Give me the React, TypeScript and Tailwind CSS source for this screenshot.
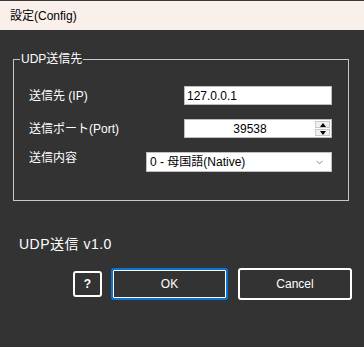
import { ChevronDown } from 'lucide-react';

const font = { fontFamily: '"Liberation Sans", "Noto Sans CJK JP", sans-serif' };

function Spinner() {
    return (
        <div className="flex flex-col gap-px w-[16px] h-full py-px pr-px">
            <div className="flex-1 flex items-center justify-center bg-[#f0f0f0] border border-[#c8c8c8]">
                <div className="w-0 h-0 border-l-[3px] border-r-[3px] border-b-[4px] border-l-transparent border-r-transparent border-b-black" />
            </div>
            <div className="flex-1 flex items-center justify-center bg-[#f0f0f0] border border-[#c8c8c8]">
                <div className="w-0 h-0 border-l-[3px] border-r-[3px] border-t-[4px] border-l-transparent border-r-transparent border-t-black" />
            </div>
        </div>
    );
}

export default function App() {
    return (
        <div className="w-[364px] h-[347px] flex flex-col bg-[#333333] text-[12px]" style={font}>
            {/* Title bar */}
            <div className="h-[30px] shrink-0 border-t border-[#3a3a3a] bg-[#f9f0eb] flex items-center pl-[10px] text-black text-[12px]">
                設定(Config)
            </div>

            {/* Body */}
            <div className="flex-1 flex flex-col text-white">
                <fieldset className="ml-[13px] mt-[22px] w-[336px] h-[149px] border border-[#c8c8c8]">
                    <legend className="ml-[6px] px-[1px] leading-[14px] text-white">UDP送信先</legend>
                    <div className="flex flex-col gap-[14px] mt-[20px] pl-[15px] pr-[16px]">
                        <div className="flex items-center h-[19px]">
                            <span>送信先 (IP)</span>
                            <div className="ml-auto w-[148px] h-[19px] bg-white border border-[#bdbdbd] text-black flex items-center pl-[2px] leading-none">
                                127.0.0.1
                            </div>
                        </div>
                        <div className="flex items-center h-[19px]">
                            <span>送信ポート(Port)</span>
                            <div className="ml-auto w-[148px] h-[19px] bg-white border border-[#bdbdbd] text-black flex items-center leading-none">
                                <span className="flex-1 text-center">39538</span>
                                <Spinner />
                            </div>
                        </div>
                        <div className="flex items-start h-[20px]">
                            <span className="-mt-[3px]">送信内容</span>
                            <div className="ml-auto w-[186px] h-[20px] bg-white border border-[#c0c0c0] text-black flex items-center pl-[3px] pr-[6px] leading-none">
                                <span className="flex-1">0 - 母国語(Native)</span>
                                <ChevronDown className="w-[11px] h-[11px] text-[#505050]" strokeWidth={1.5} />
                            </div>
                        </div>
                    </div>
                </fieldset>

                <div className="ml-[19px] mt-[36px] text-[14px] leading-[14px] tracking-[0.5px]">UDP送信 v1.0</div>

                <div className="flex items-center ml-[73px] mt-[17px]">
                    <button className="w-[29px] h-[26px] border-2 border-white rounded-[3px] text-white font-bold text-[12px] flex items-center justify-center">
                        ?
                    </button>
                    <button className="ml-[9px] w-[117px] h-[32px] border-2 border-[#0a74d6] rounded-[3px] shadow-[inset_0_0_0_1px_#ffffff] text-white text-[12px]">
                        OK
                    </button>
                    <button className="ml-[10px] w-[114px] h-[32px] border-2 border-white rounded-[3px] text-white text-[12px]">
                        Cancel
                    </button>
                </div>
            </div>
        </div>
    );
}
